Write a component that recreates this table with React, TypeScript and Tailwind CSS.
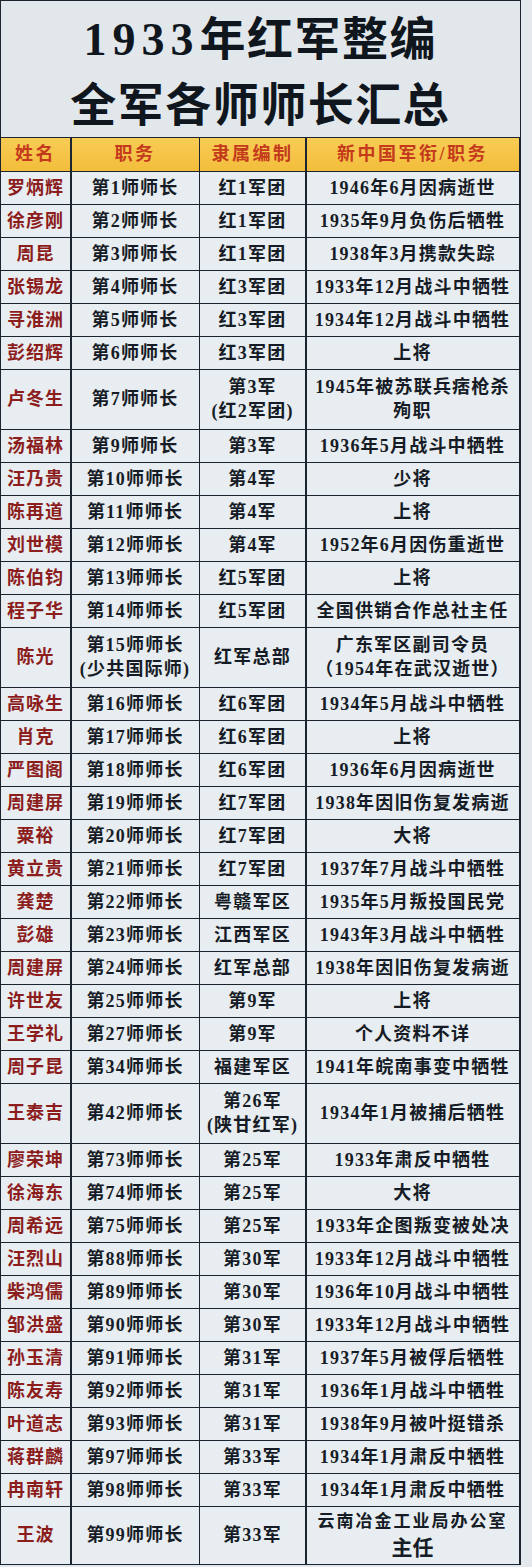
import React from 'react';

type Row = {
  name: string;
  post: string;
  unit: string;
  fate: string;
  h?: 'double' | 'last';
};

const ROWS: Row[] = [
  { name: '罗炳辉', post: '第1师师长', unit: '红1军团', fate: '1946年6月因病逝世' },
  { name: '徐彦刚', post: '第2师师长', unit: '红1军团', fate: '1935年9月负伤后牺牲' },
  { name: '周昆', post: '第3师师长', unit: '红1军团', fate: '1938年3月携款失踪' },
  { name: '张锡龙', post: '第4师师长', unit: '红3军团', fate: '1933年12月战斗中牺牲' },
  { name: '寻淮洲', post: '第5师师长', unit: '红3军团', fate: '1934年12月战斗中牺牲' },
  { name: '彭绍辉', post: '第6师师长', unit: '红3军团', fate: '上将' },
  { name: '卢冬生', post: '第7师师长', unit: '第3军\n(红2军团)', fate: '1945年被苏联兵痞枪杀\n殉职', h: 'double' },
  { name: '汤福林', post: '第9师师长', unit: '第3军', fate: '1936年5月战斗中牺牲' },
  { name: '汪乃贵', post: '第10师师长', unit: '第4军', fate: '少将' },
  { name: '陈再道', post: '第11师师长', unit: '第4军', fate: '上将' },
  { name: '刘世模', post: '第12师师长', unit: '第4军', fate: '1952年6月因伤重逝世' },
  { name: '陈伯钧', post: '第13师师长', unit: '红5军团', fate: '上将' },
  { name: '程子华', post: '第14师师长', unit: '红5军团', fate: '全国供销合作总社主任' },
  { name: '陈光', post: '第15师师长\n(少共国际师)', unit: '红军总部', fate: '广东军区副司令员\n（1954年在武汉逝世）', h: 'double' },
  { name: '高咏生', post: '第16师师长', unit: '红6军团', fate: '1934年5月战斗中牺牲' },
  { name: '肖克', post: '第17师师长', unit: '红6军团', fate: '上将' },
  { name: '严图阁', post: '第18师师长', unit: '红6军团', fate: '1936年6月因病逝世' },
  { name: '周建屏', post: '第19师师长', unit: '红7军团', fate: '1938年因旧伤复发病逝' },
  { name: '粟裕', post: '第20师师长', unit: '红7军团', fate: '大将' },
  { name: '黄立贵', post: '第21师师长', unit: '红7军团', fate: '1937年7月战斗中牺牲' },
  { name: '龚楚', post: '第22师师长', unit: '粤赣军区', fate: '1935年5月叛投国民党' },
  { name: '彭雄', post: '第23师师长', unit: '江西军区', fate: '1943年3月战斗中牺牲' },
  { name: '周建屏', post: '第24师师长', unit: '红军总部', fate: '1938年因旧伤复发病逝' },
  { name: '许世友', post: '第25师师长', unit: '第9军', fate: '上将' },
  { name: '王学礼', post: '第27师师长', unit: '第9军', fate: '个人资料不详' },
  { name: '周子昆', post: '第34师师长', unit: '福建军区', fate: '1941年皖南事变中牺牲' },
  { name: '王泰吉', post: '第42师师长', unit: '第26军\n(陕甘红军)', fate: '1934年1月被捕后牺牲', h: 'double' },
  { name: '廖荣坤', post: '第73师师长', unit: '第25军', fate: '1933年肃反中牺牲' },
  { name: '徐海东', post: '第74师师长', unit: '第25军', fate: '大将' },
  { name: '周希远', post: '第75师师长', unit: '第25军', fate: '1933年企图叛变被处决' },
  { name: '汪烈山', post: '第88师师长', unit: '第30军', fate: '1933年12月战斗中牺牲' },
  { name: '柴鸿儒', post: '第89师师长', unit: '第30军', fate: '1936年10月战斗中牺牲' },
  { name: '邹洪盛', post: '第90师师长', unit: '第30军', fate: '1933年12月战斗中牺牲' },
  { name: '孙玉清', post: '第91师师长', unit: '第31军', fate: '1937年5月被俘后牺牲' },
  { name: '陈友寿', post: '第92师师长', unit: '第31军', fate: '1936年1月战斗中牺牲' },
  { name: '叶道志', post: '第93师师长', unit: '第31军', fate: '1938年9月被叶挺错杀' },
  { name: '蒋群麟', post: '第97师师长', unit: '第33军', fate: '1934年1月肃反中牺牲' },
  { name: '冉南轩', post: '第98师师长', unit: '第33军', fate: '1934年1月肃反中牺牲' },
  { name: '王波', post: '第99师师长', unit: '第33军', fate: '', h: 'last' },
];

const FONT = "font-['Liberation_Serif','Noto_Sans_CJK_SC',serif]";

function Cell({ row, children, className = '' }: { row?: Row; children: React.ReactNode; className?: string }) {
  const height = row?.h === 'double' ? 'h-[58.5px]' : row?.h === 'last' ? 'h-[56.5px]' : 'h-[31.5px]';
  return (
    <div
      className={`${height} bg-[#e8edf1] flex items-center justify-center text-center whitespace-pre-line leading-[24px] ${className}`}
    >
      {children}
    </div>
  );
}

export default function App() {
  return (
    <div className={`w-[532px] min-h-[1567px] bg-[#e3e8ec] ${FONT}`}>
      {/* 标题 */}
      <div className="w-[520.5px] h-[137px] border-x-[1.5px] border-t-[1.5px] border-[#1b2530] bg-[#e2e7eb] pt-[6px] text-center text-[#10161d] text-[46px] leading-[66px] font-bold tracking-[1.5px]">
        <div>
          <span className="tracking-[6px]">1933</span>年红军整编
        </div>
        <div>全军各师师长汇总</div>
      </div>

      <div className="w-[520.5px] grid grid-cols-[69px_127px_105px_212px] gap-[1.5px] bg-[#1b2530] border-[1.5px] border-[#1b2530]">
        {['姓名', '职务', '隶属编制', '新中国军衔/职务'].map((t) => (
          <div
            key={t}
            className="h-[32.5px] bg-gradient-to-b from-[#f8cc55] to-[#f3bd3a] flex items-center justify-center text-[18px] tracking-[2.5px] text-[#c43a1c] font-semibold"
          >
            {t}
          </div>
        ))}

        {ROWS.map((r, i) => (
          <React.Fragment key={i}>
            <Cell row={r} className="text-[18px] tracking-[1px] font-semibold text-[#8c1d1d]">
              {r.name}
            </Cell>
            <Cell row={r} className="text-[18px] tracking-[1.2px] font-semibold text-[#161c26]">
              {r.post}
            </Cell>
            <Cell row={r} className="text-[18px] tracking-[1.2px] font-semibold text-[#161c26]">
              {r.unit}
            </Cell>
            {r.h === 'last' ? (
              <Cell row={r} className="flex-col text-[#161c26]">
                <span className="text-[17px] leading-[22px] tracking-[2px] font-semibold">云南冶金工业局办公室</span>
                <span className="text-[21px] leading-[26px] font-bold font-['Noto_Sans_CJK_SC',sans-serif]">主任</span>
              </Cell>
            ) : (
              <Cell row={r} className="text-[18px] font-semibold text-[#161c26] tracking-[1.2px]">
                {r.fate}
              </Cell>
            )}
          </React.Fragment>
        ))}
      </div>
    </div>
  );
}
